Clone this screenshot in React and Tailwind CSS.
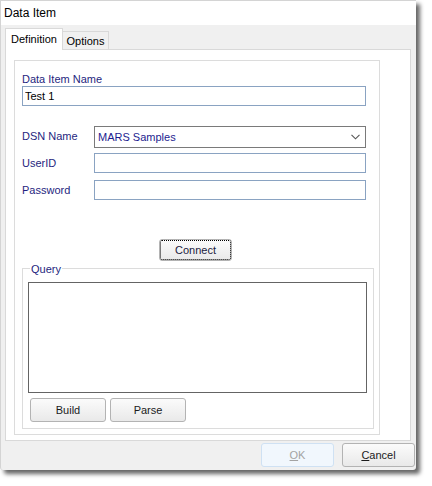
import { useState } from 'react';

const font = { fontFamily: '"Liberation Sans", Arial, sans-serif' };

function WinButton({ children, className = '', disabled = false, focused = false }) {
  const base = disabled
    ? 'bg-[#f1f7fd] border-[#cfe1f3] text-[#a3a3a3]'
    : 'bg-gradient-to-b from-[#fbfbfb] to-[#e9e9e9] border-[#b3b3b3] text-[#1b1b1b]';
  return (
    <button
      className={`flex items-center justify-center border rounded-[3px] text-[11px] ${base} ${
        focused ? 'outline-1 outline-dotted outline-black outline-offset-[-2px]' : ''
      } ${className}`}
    >
      {children}
    </button>
  );
}

export default function App() {
  const [name, setName] = useState('Test 1');

  return (
    <div className="w-[432px] h-[486px] bg-white" style={font}>
      <div className="w-[416px] h-[470px] border-t border-l border-[#d4d4d4] rounded-b-[3px] flex flex-col bg-[#f0f0f0] shadow-[4px_4px_4px_rgba(0,0,0,0.6)]">
        {/* title */}
        <div className="h-[24px] bg-white flex items-center pl-[3px] text-[12px] text-black">Data Item</div>

        {/* tabs */}
        <div className="flex items-end px-[4px] pt-[3px] -mb-px">
          <div className="relative z-10 h-[22px] w-[58px] bg-white border border-b-0 border-[#d9d9d9] flex items-center justify-center text-[11px] text-black pb-[1px]">
            Definition
          </div>
          <div className="h-[19px] w-[46px] bg-[#f0f0f0] border border-l-0 border-[#d9d9d9] flex items-center justify-center text-[11px] text-black pt-[1px]">
            Options
          </div>
        </div>

        {/* tab panel */}
        <div className="mx-[4px] w-[406px] h-[392px] bg-white border border-[#d9d9d9] pl-[8px] pt-[10px]">
          <div className="w-[366px] h-[375px] border border-[#dcdcdc] pl-[7px] pt-[11px] flex flex-col">
            <div className="h-[14px] leading-[14px] text-[11px] text-[#1f1f80]">Data Item Name</div>
            <input
              value={name}
              onChange={(e) => setName(e.target.value)}
              className="h-[20px] w-[344px] border border-[#8aa3c2] px-[2px] text-[11px] text-black outline-none"
            />

            <div className="mt-[20px] flex items-center">
              <div className="w-[72px] text-[11px] text-[#1f1f80] -mt-[2px]">DSN Name</div>
              <div className="h-[22px] w-[272px] border border-[#7a7a7a] flex items-center justify-between pl-[3px] pr-[5px]">
                <span className="text-[11px] text-[#1d1d90]">MARS Samples</span>
                <svg width="9" height="6" viewBox="0 0 9 6">
                  <polyline points="0.5,0.8 4.5,4.8 8.5,0.8" fill="none" stroke="#555" strokeWidth="1.1" />
                </svg>
              </div>
            </div>

            <div className="mt-[5px] flex items-center">
              <div className="w-[72px] text-[11px] text-[#1f1f80]">UserID</div>
              <input className="h-[20px] w-[272px] border border-[#8aa3c2] outline-none" />
            </div>

            <div className="mt-[7px] flex items-center">
              <div className="w-[72px] text-[11px] text-[#1f1f80]">Password</div>
              <input type="password" className="h-[20px] w-[272px] border border-[#8aa3c2] outline-none" />
            </div>

            <WinButton focused className="mt-[39px] ml-[137px] w-[73px] h-[22px] text-[#1b1b40]">
              Connect
            </WinButton>

            {/* query group */}
            <div className="relative mt-[7px] w-[352px] h-[161px] border border-[#dcdcdc] pl-[5px] pt-[13px]">
              <span className="absolute -top-[8px] left-[7px] bg-white px-[1px] text-[11px] text-[#1f1f80]">Query</span>
              <textarea className="block w-[339px] h-[111px] border border-[#646464] resize-none outline-none" />
              <div className="mt-[5px] ml-[2px] flex gap-[4px]">
                <WinButton className="w-[76px] h-[24px]">Build</WinButton>
                <WinButton className="w-[76px] h-[24px]">Parse</WinButton>
              </div>
            </div>
          </div>
        </div>

        {/* footer */}
        <div className="mt-[2px] flex justify-end gap-[8px] pr-[1px]">
          <WinButton disabled className="w-[73px] h-[24px]">
            <span className="underline">O</span>K
          </WinButton>
          <WinButton className="w-[73px] h-[24px]">
            <span className="underline">C</span>ancel
          </WinButton>
        </div>
      </div>
    </div>
  );
}
